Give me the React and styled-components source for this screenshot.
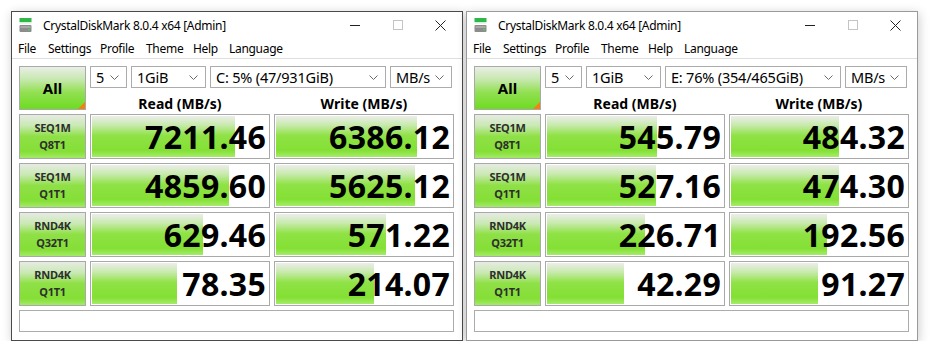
import React from 'react';
import styled, { createGlobalStyle } from 'styled-components';

const Global = createGlobalStyle`
  body {
    margin: 0;
    background: #ffffff;
    font-family: "Noto Sans", "Open Sans", sans-serif;
  }
`;

const Desktop = styled.div`
  display: flex;
  gap: 3px;
  padding: 11px 0 0 11px;
`;

const Window = styled.div`
  width: 450px;
  border: 1px solid ${(p) => (p.active ? '#4a4a4a' : '#9a9a9a')};
  background: #fff;
  box-shadow: 1px 2px 10px rgba(0, 0, 0, 0.2);
  display: flex;
  flex-direction: column;
`;

const TitleBar = styled.div`
  height: 26px;
  display: flex;
  align-items: center;
  padding-left: 7px;
`;

const Title = styled.span`
  font-size: 12px;
  color: #000;
  margin-left: 11px;
  letter-spacing: -0.3px;
  flex: 1;
`;

const WinButton = styled.div`
  width: 43px;
  height: 26px;
  display: flex;
  align-items: center;
  justify-content: center;
`;

const MenuBar = styled.div`
  height: 20px;
  display: flex;
  align-items: center;
  padding-left: 1px;
  border-bottom: 1px solid #dedede;
`;

const MenuItem = styled.span`
  font-size: 12px;
  color: #000;
  width: ${(p) => p.w}px;
  padding-left: 5px;
  box-sizing: border-box;
  letter-spacing: -0.3px;
`;

const Panel = styled.div`
  display: grid;
  grid-template-columns: 67px 180px 180px;
  grid-template-rows: 22px 18px repeat(4, 45px) 22px;
  gap: 4px;
  padding: 7px 7px 8px 7px;
`;

const AllButton = styled.div`
  grid-row: 1 / span 2;
  position: relative;
  border: 1px solid #a9a9a9;
  background: linear-gradient(to bottom, #e9efe6 0%, #c6e8ae 30%, #92e052 60%, #6edb22 100%);
  display: flex;
  align-items: center;
  justify-content: center;
  font-weight: 700;
  font-size: 15px;
  color: #000;
  &::after {
    content: '';
    position: absolute;
    right: 0;
    bottom: 0;
    border-style: solid;
    border-width: 0 0 7px 7px;
    border-color: transparent transparent #f77f0f transparent;
  }
`;

const Controls = styled.div`
  grid-column: 2 / span 2;
  display: flex;
  gap: 4px;
`;

const Select = styled.div`
  width: ${(p) => p.w}px;
  box-sizing: border-box;
  border: 1px solid #acacac;
  background: #fff;
  display: flex;
  align-items: center;
  justify-content: space-between;
  padding: 0 7px 0 5px;
  font-size: 14.5px;
  color: #000;
  letter-spacing: -0.2px;
`;

const Header = styled.div`
  font-weight: 700;
  font-size: 14px;
  text-align: center;
  line-height: 18px;
  margin-top: 3px;
  color: #000;
`;

const Label = styled.div`
  border: 1px solid #a9a9a9;
  background: linear-gradient(to bottom, #e6ebe3 0%, #c9e9b3 25%, #8fe046 50%, #85df36 85%, #a3ea66 100%);
  display: flex;
  flex-direction: column;
  align-items: center;
  justify-content: center;
  gap: 3px;
  font-weight: 700;
  font-size: 11px;
  line-height: 14px;
  color: #2e2e2e;
  letter-spacing: -0.3px;
`;

const Cell = styled.div`
  position: relative;
  border: 1px solid #a9a9a9;
  background: #fff;
  padding: 1px;
  display: flex;
  overflow: hidden;
`;

const Bar = styled.div`
  height: 100%;
  background: linear-gradient(to bottom, #eceeea 0%, #c8eaad 22%, #8fe245 48%, #84e034 84%, #a5ec6a 100%);
`;

const Value = styled.div`
  position: absolute;
  right: 3px;
  top: 0;
  bottom: 0;
  display: flex;
  align-items: center;
  font-weight: 700;
  font-size: 32px;
  letter-spacing: 0.3px;
  color: #000;
`;

const Status = styled.div`
  grid-column: 1 / span 3;
  border: 1px solid #acacac;
  background: #fff;
`;

const AppIcon = () => (
  <svg width="13" height="15" viewBox="0 0 13 15">
    <rect x="0.5" y="0" width="12" height="4" fill="#2fb84a" />
    <rect x="0.5" y="4" width="12" height="1.5" fill="#d6eed6" />
    <rect x="0.5" y="7" width="12" height="7" rx="1" fill="#8c8c8c" />
    <rect x="1.5" y="8" width="10" height="2" fill="#a9a9a9" />
    <rect x="9" y="11" width="2" height="1.5" fill="#3ed35a" />
  </svg>
);

const Chevron = () => (
  <svg width="9" height="5" viewBox="0 0 9 5">
    <polyline points="0.5,0.5 4.5,4.5 8.5,0.5" fill="none" stroke="#6a6a6a" strokeWidth="1" />
  </svg>
);

const menu = [
  ['File', 30],
  ['Settings', 52],
  ['Profile', 46],
  ['Theme', 47],
  ['Help', 36],
  ['Language', 70],
];

const meter = (v) => Math.min(1, Math.log10(v * 10) / 6) * 100;

const windows = [
  {
    active: true,
    drive: 'C: 5% (47/931GiB)',
    rows: [
      ['SEQ1M', 'Q8T1', '7211.46', '6386.12'],
      ['SEQ1M', 'Q1T1', '4859.60', '5625.12'],
      ['RND4K', 'Q32T1', '629.46', '571.22'],
      ['RND4K', 'Q1T1', '78.35', '214.07'],
    ],
  },
  {
    active: false,
    drive: 'E: 76% (354/465GiB)',
    rows: [
      ['SEQ1M', 'Q8T1', '545.79', '484.32'],
      ['SEQ1M', 'Q1T1', '527.16', '474.30'],
      ['RND4K', 'Q32T1', '226.71', '192.56'],
      ['RND4K', 'Q1T1', '42.29', '91.27'],
    ],
  },
];

const ScoreCell = ({ value }) => (
  <Cell>
    <Bar style={{ width: meter(parseFloat(value)) + '%' }} />
    <Value>{value}</Value>
  </Cell>
);

const DiskMark = ({ win }) => (
  <Window active={win.active}>
    <TitleBar>
      <AppIcon />
      <Title>CrystalDiskMark 8.0.4 x64 [Admin]</Title>
      <WinButton>
        <svg width="10" height="10" viewBox="0 0 10 10">
          <line x1="0" y1="5.5" x2="10" y2="5.5" stroke="#222" strokeWidth="1" />
        </svg>
      </WinButton>
      <WinButton>
        <svg width="10" height="10" viewBox="0 0 10 10">
          <rect x="0.5" y="0.5" width="9" height="9" fill="none" stroke="#c4c4c4" strokeWidth="1" />
        </svg>
      </WinButton>
      <WinButton>
        <svg width="11" height="11" viewBox="0 0 11 11">
          <path d="M0.5 0.5 L10.5 10.5 M10.5 0.5 L0.5 10.5" stroke="#222" strokeWidth="1" />
        </svg>
      </WinButton>
    </TitleBar>
    <MenuBar>
      {menu.map(([m, w]) => (
        <MenuItem key={m} w={w}>{m}</MenuItem>
      ))}
    </MenuBar>
    <Panel>
      <AllButton>All</AllButton>
      <Controls>
        <Select w={37}>5<Chevron /></Select>
        <Select w={75}>1GiB<Chevron /></Select>
        <Select w={176}>{win.drive}<Chevron /></Select>
        <Select w={62}>MB/s<Chevron /></Select>
      </Controls>
      <Header>Read (MB/s)</Header>
      <Header>Write (MB/s)</Header>
      {win.rows.map((r, i) => (
        <React.Fragment key={i}>
          <Label>
            <span>{r[0]}</span>
            <span>{r[1]}</span>
          </Label>
          <ScoreCell value={r[2]} />
          <ScoreCell value={r[3]} />
        </React.Fragment>
      ))}
      <Status />
    </Panel>
  </Window>
);

export default function App() {
  return (
    <>
      <Global />
      <Desktop>
        {windows.map((w, i) => (
          <DiskMark key={i} win={w} />
        ))}
      </Desktop>
    </>
  );
}
